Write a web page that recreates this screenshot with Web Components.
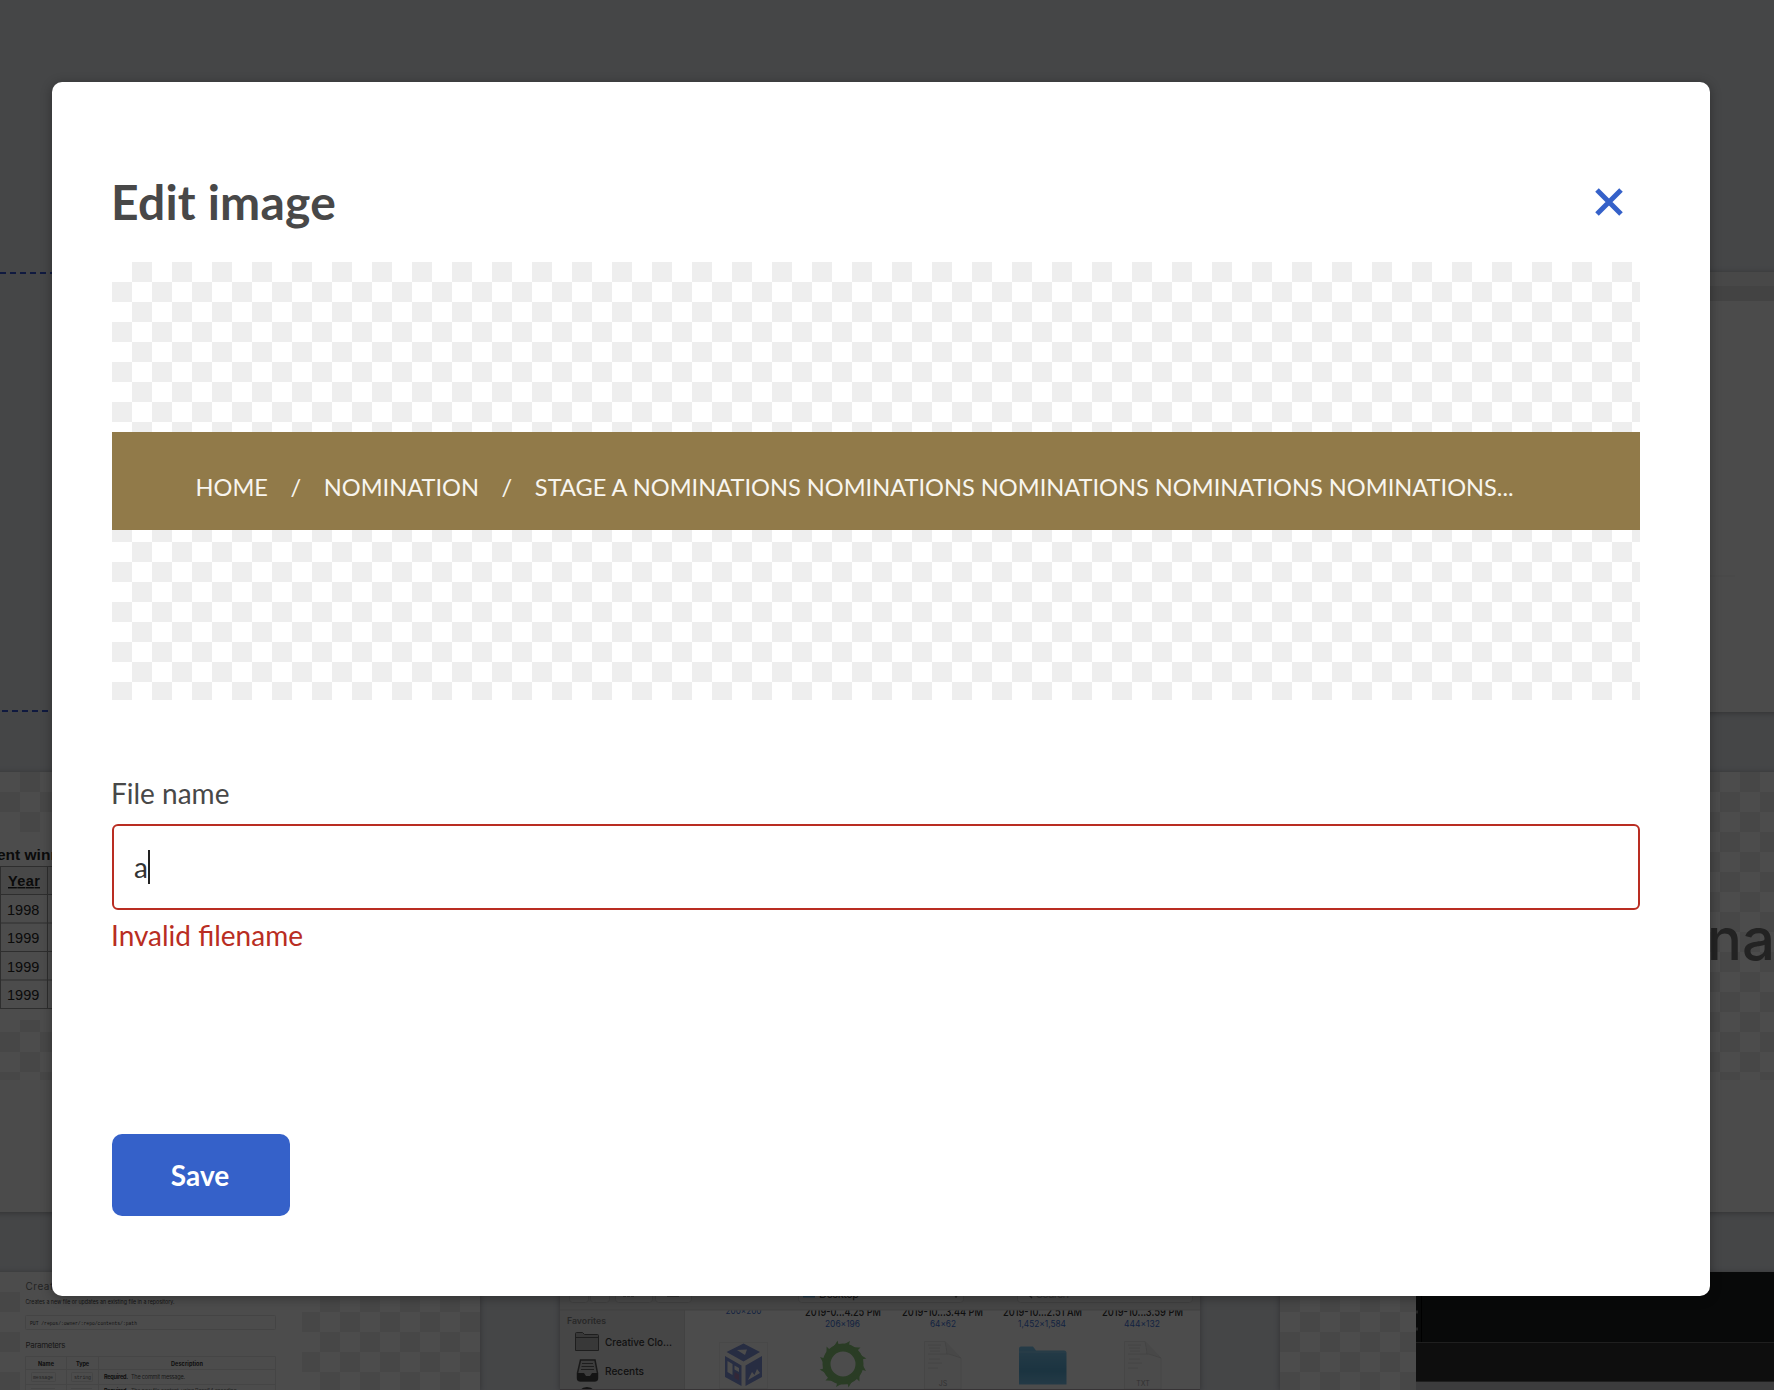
<!DOCTYPE html>
<html lang="en">
<head>
<meta charset="utf-8">
<title>Edit image</title>
<style>
html,body{margin:0;height:1390px;overflow:hidden;background:#e6e9ef;font-family:Lato,sans-serif}
</style>
</head>
<body>
<media-library>
  <upload-card></upload-card><media-card></media-card><media-card id="r1c3"></media-card>
  <media-card checker id="r2c1"></media-card><media-card></media-card><media-card checker id="r2c3"></media-card>
  <media-card checker id="r3c1"></media-card><media-card id="r3c2"></media-card><media-card checker id="r3c3"></media-card>
</media-library>
<modal-overlay>
  <edit-dialog heading="Edit image">
    <image-preview slot="preview">
      <crumb-banner>
        <span>HOME</span><span>/</span><span>NOMINATION</span><span>/</span><span>STAGE A NOMINATIONS NOMINATIONS NOMINATIONS NOMINATIONS NOMINATIONS...</span>
      </crumb-banner>
    </image-preview>
    <text-field label="File name" value="a" error="Invalid filename"></text-field>
    <primary-button slot="actions">Save</primary-button>
  </edit-dialog>
</modal-overlay>
<script>
const define = (name, html) => customElements.define(name, class extends HTMLElement {
  connectedCallback() {
    if (this.shadowRoot) return;
    const root = this.attachShadow({mode: 'open'});
    root.innerHTML = typeof html === 'function' ? html(this) : html;
  }
});
const CHECKER = 'conic-gradient(#eee 25%,#fff 0 50%,#eee 0 75%,#fff 0) 0 0/40px 40px';
const FIT = 'lengthAdjust="spacingAndGlyphs"';

// Thumbnails shown inside the library cards, keyed by card id
const thumbs = {
  r1c3: `<svg width="640" height="440"><rect width="640" height="14" fill="#f1f1f1"/><rect y="14" width="640" height="15" fill="#e2e2e2"/><path d="M420 304H455" stroke="#f4f4f4" stroke-width="2"/></svg>`,
  r2c1: `<svg width="640" height="308" font-family="Liberation Sans,sans-serif" font-size="14.5" fill="#262626">
    <rect x="0" y="60" width="640" height="188" fill="#fff"/>
    <text x="157" y="87.500" font-weight="700" font-size="15.500">ent winners</text>
    <g stroke="#999" fill="none"><rect x="160.5" y="94.5" width="380" height="28" fill="#f1f1f1"/><path d="M160.5 94V237M207.5 94V237M160 122.5H540M160 151H540M160 179.5H540M160 208H540M160 236.5H540"/></g>
    <text x="168" y="114" font-weight="700" text-decoration="underline" textLength="32">Year</text>
    <text x="167" y="142.500">1998</text><text x="167" y="171">1999</text><text x="167" y="199.500">1999</text><text x="167" y="228">1999</text>
  </svg>`,
  r2c3: `<svg width="640" height="308"><text x="427" y="188" font-family="Inter,sans-serif" font-size="59" font-weight="500" fill="#757575" textLength="68" ${FIT}>na</text></svg>`,
  r3c1: `<svg width="640" height="308" font-family="Inter,sans-serif" fill="#777">
    <rect x="180" width="282" height="308" fill="#fff"/>
    <text x="185.500" y="18" font-size="10" textLength="34">Create</text><text x="221" y="18" font-size="10">a file</text>
    <text x="185.500" y="32" font-size="5.500" fill="#444" textLength="149" ${FIT}>Creates a new file or updates an existing file in a repository.</text>
    <rect x="185.500" y="43.500" width="250" height="14" rx="1" fill="none" stroke="#e4e4e4"/>
    <text x="190" y="52.500" font-family="Liberation Mono,monospace" font-size="5" fill="#444" textLength="107" ${FIT}>PUT /repos/:owner/:repo/contents/:path</text>
    <text x="185.500" y="76" font-size="8" fill="#555" textLength="40">Parameters</text>
    <path d="M185.500 118V84.500H435.500V118M185 97.500H435M185 112.500H435M226.500 84V118M258.500 84V118" fill="none" stroke="#e6e6e6"/>
    <g font-size="5.500" font-weight="700" fill="#333"><text x="198" y="93.500" textLength="16">Name</text><text x="236" y="93.500" textLength="13">Type</text><text x="331" y="93.500" textLength="32">Description</text><text x="264" y="107" textLength="24">Required.</text><text x="264" y="121" textLength="24">Required.</text></g>
    <g font-family="Liberation Mono,monospace" font-size="5"><text x="193" y="107" textLength="20">message</text><text x="234" y="107" textLength="17">string</text></g>
    <g fill="none" stroke="#e6e6e6"><rect x="191.500" y="100.500" width="24" height="9" rx="1"/><rect x="231.500" y="100.500" width="21" height="9" rx="1"/><path d="M191 116.500H215M231 116.500H252"/></g>
    <text x="291" y="107" font-size="5.500" fill="#555" textLength="54">The commit message.</text><text x="291" y="121" font-size="5.500" textLength="107">The new file content, using Base64 encoding.</text>
  </svg>`,
  r3c2: `<svg width="640" height="440" font-family="Inter,sans-serif">
    <defs><linearGradient id="fold" x2="0" y2="1"><stop stop-color="#7fc8f0"/><stop offset=".65" stop-color="#5cadd8"/><stop offset="1" stop-color="#78c2ea"/></linearGradient></defs>
    <rect width="640" height="440" fill="#fff"/><rect y="38" width="124" height="402" fill="#e9e9e9"/><path d="M124.500 38V440" stroke="#ddd"/>
    <g fill="#333" font-size="11.500" font-weight="500">
      <text x="245" y="44" textLength="76" ${FIT}>2019-0...4.25 PM</text><text x="342" y="44" textLength="81" ${FIT}>2019-10...3.44 PM</text><text x="443" y="44" textLength="79" ${FIT}>2019-10...2.51 AM</text><text x="542" y="44" textLength="81" ${FIT}>2019-10...3.59 PM</text></g>
    <text x="165.500" y="42" font-size="9" fill="#3f74d8" textLength="36" ${FIT}>200×200</text>
    <rect width="640" height="38" fill="#ececec"/><path d="M0 38H640" stroke="#d8d8d8"/>
    <g fill="#f4f4f4" stroke="#d8d8d8"><rect x="9.500" y="8" width="19" height="22.500" rx="3"/><rect x="30.500" y="8" width="19" height="22.500" rx="3"/><rect x="55.500" y="8" width="37" height="22.500" rx="3"/><rect x="95.500" y="8" width="36" height="22.500" rx="3"/><rect x="238.500" y="8" width="165" height="22.500" rx="3"/><rect x="457.500" y="8" width="175" height="22.500" rx="3"/></g>
    <rect x="243" y="15" width="12" height="10.500" fill="#64aee0"/><text x="259" y="25.500" font-size="11" fill="#444" textLength="40">Desktop</text><text x="476" y="25.500" font-size="11" fill="#aaa" textLength="33">Search</text>
    <path d="M469 23l3 3M20 22l-2-2 2-2M37 22l2-2-2-2M394 22l2 3 2-3" fill="none" stroke="#777" stroke-width="1.500"/>
    <path d="M63 22.500h3v2h-3zM67 22.500h3v2h-3zM71 22.500h3v2h-3zM107 23h12v1.500h-12z" fill="#555"/>
    <g font-size="9" fill="#3f74d8"><text x="265" y="54.500" textLength="35" ${FIT}>206×196</text><text x="370" y="54.500" textLength="26" ${FIT}>64×62</text><text x="458" y="54.500" textLength="48" ${FIT}>1,452×1,584</text><text x="564" y="54.500" textLength="36" ${FIT}>444×132</text></g>
    <text x="7" y="52" font-size="8.500" font-weight="600" fill="#888" textLength="39" ${FIT}>Favorites</text>
    <g fill="#3c3c3c" font-size="10.500" font-weight="500"><text x="45" y="74" textLength="67" ${FIT}>Creative Clo...</text><text x="45" y="102.500" textLength="39" ${FIT}>Recents</text></g>
    <path d="M15.500 78.500V61.500q0-1 1-1h6l2 2h13q1 0 1 1V78.500zM15.500 65.500H38.500" fill="#bbb" stroke="#666"/>
    <path d="M17.500 101L20.500 88H35L37.500 101V106q0 3-3 3H20.500q-3 0-3-3z" fill="#ccc" stroke="#555" stroke-width="1.500"/><path d="M22 91.500H33M21.500 94.500H34M21 97.500H34" stroke="#666"/><path d="M17 101H24l2 3h4l2-3H38V106q0 3-3 3H20q-3 0-3-3z" fill="#444"/>
    <circle cx="27" cy="125" r="10" fill="#444"/>
    <rect x="159.500" y="70.500" width="48" height="46" fill="none" stroke="#f1f1f1"/>
    <g transform="translate(0 16)"><g fill="#8496dc"><path d="M183.500 55.500l16.500 8.500-16.500 9.500-17-9.500z"/><path d="M165 68l16.500 9.500V98l-16.500-9z"/><path d="M202 68l-16.500 9.500V98l16.500-9z"/></g>
    <g fill="#fff"><path d="M177 62l10-.5-2 5.500z"/><path d="M167.500 73l5 3v11l-5-3zM174.500 77.500l4.500 2.500v4l-4.500-2.500zM188 92l4-8 2.500 3 2.500-6 3 4z"/></g><path d="M174.500 84l4.500 2.500v6l-4.500-2.500z" fill="#ab82b8"/></g>
    <g transform="translate(283 92)" fill="none" stroke="#8cc97c"><circle r="16.500" stroke-width="8"/><g fill="#8cc97c" stroke="none">${Array.from({length:12},(_,i)=>`<path transform="rotate(${i*30})" d="M-10-17Q-1-18 7-23Q5-18 7-14z"/>`).join('')}</g></g>
    ${[[364,'JS'],[564,'TXT']].map(([x,t])=>`<g transform="translate(0 16)"><path d="M${x+.5} 101V53.500H${x+21}L${x+37} 70V101z" fill="#fbfbfb" stroke="#ebebeb"/><path d="M${x+21} 53.500q3 14 1 12 2 0 15 4.500" fill="#f2f2f2" stroke="#e2e2e2"/><path d="M${x+4} 57H${x+17}M${x+5} 60H${x+16}M${x+6} 63H${x+16}M${x+4} 66H${x+24}M${x+5} 71H${x+16}M${x+4} 75H${x+18}M${x+4} 80H${x+14}" stroke="#e4e4e4"/><text x="${x+19}" y="98" text-anchor="middle" font-size="7" fill="#aaa">${t}</text></g>`).join('')}
    <g transform="translate(0 15.500)"><path d="M459 97V61q0-2 2-2h12l3 4h28q2.500 0 2.500 2.500V97z" fill="url(#fold)"/><path d="M459 64.500H506" stroke="#8fd0f2"/></g>
    <path d="M0 117.500H640" stroke="#b9b0b4"/>
  </svg>`,
  r3c3: `<svg width="640" height="440"><rect x="136" width="504" height="70" fill="#1b211f"/><path d="M141.500 0V70" stroke="#000"/><path d="M136 40h2M136 57h2" stroke="#777" stroke-width="3"/><rect x="136" y="70" width="504" height="39" fill="#303030"/><path d="M136 70.500H640M136 109.500H640" stroke="#686868"/><rect x="136" y="110" width="504" height="330" fill="#c9cacb"/></svg>`
};

define('media-library', `<style>:host{display:block;height:1390px;overflow:hidden}
.grid{display:grid;grid-template-columns:repeat(3,640px);grid-template-rows:440px 440px 118px;gap:60px 80px;margin-left:-160px;padding-top:272px}</style><div class="grid"><slot></slot></div>`);
define('upload-card', `<style>:host{--dash:#3456d4;display:flex;flex-direction:column;justify-content:space-between}
i{height:2px;background:repeating-linear-gradient(90deg,var(--dash) 0 6px,transparent 6px 10px)}i+i{background-position:2px 0}</style><i></i><i></i>`);
define('media-card', el => `<style>:host{display:block;overflow:hidden;background:#fcfcfc;box-shadow:0 1px 6px rgba(0,0,0,.3)}
div{height:${el.hasAttribute('checker')?308:440}px;${el.hasAttribute('checker')?'background:'+CHECKER:''}}svg{display:block}</style><div>${thumbs[el.id]||''}</div>`);

define('modal-overlay', `<style>:host{position:absolute;inset:0 0 auto 0;height:1390px;box-sizing:border-box;display:flex;align-items:flex-start;padding:82px 64px 0 52px;background:rgba(0,0,0,.7)}</style><slot></slot>`);
define('edit-dialog', el => `<style>
:host{display:flex;flex-direction:column;flex:1;height:1214px;box-sizing:border-box;padding:90px 70px 0 60px;background:#fff;border-radius:10px;box-shadow:0 2px 12px rgba(0,0,0,.33)}
header{display:flex;justify-content:space-between;height:90px;padding-right:17px}
h1{margin:0 0 0 -1px;font-size:48px;line-height:60px;font-weight:700;letter-spacing:.2px;color:#484848}
button{all:unset;height:60px;display:flex;align-items:center}
.body{margin-top:76px}footer{margin-top:182px;display:flex}
</style><header><h1>${el.getAttribute('heading')}</h1><button aria-label="Close"><svg width="28" height="28" viewBox="0 0 28 28"><path d="M2 2L26 26M26 2L2 26" stroke="#3561c9" stroke-width="5"/></svg></button></header>
<slot name="preview"></slot><div class="body"><slot></slot></div><footer><slot name="actions"></slot></footer>`);
define('image-preview', `<style>:host{display:flex;flex-direction:column;justify-content:center;height:438px;background:${CHECKER}}</style><slot></slot>`);
define('crumb-banner', `<style>:host{display:flex;align-items:center;height:98px;box-sizing:border-box;padding:12px 0 0 83.5px;gap:22.6px;background:#917a49;color:#f8f5ee;font-size:23.6px;line-height:30px;white-space:nowrap}</style><slot></slot>`);
define('text-field', el => `<style>
:host{display:flex;flex-direction:column;font-size:28px;line-height:34px;color:#484848}
.box{display:flex;align-items:center;height:86px;box-sizing:border-box;margin:14px 0 8px;padding:0 20px;border:2px solid #b92d22;border-radius:6px;color:#333}
label,.error{margin-left:-1px}
.caret{width:2px;height:34px;background:#222}.error{color:#b92d22}
</style><label>${el.getAttribute('label')}</label><div class="box"><span>${el.getAttribute('value')}</span><span class="caret"></span></div><span class="error">${el.getAttribute('error')}</span>`);
define('primary-button', `<style>:host{display:flex;align-items:center;justify-content:center;width:178px;height:82px;box-sizing:border-box;padding-right:2px;border-radius:10px;background:#3561c9;color:#fff;font-size:28px;font-weight:700;line-height:34px}</style><slot></slot>`);
</script>
</body>
</html>
